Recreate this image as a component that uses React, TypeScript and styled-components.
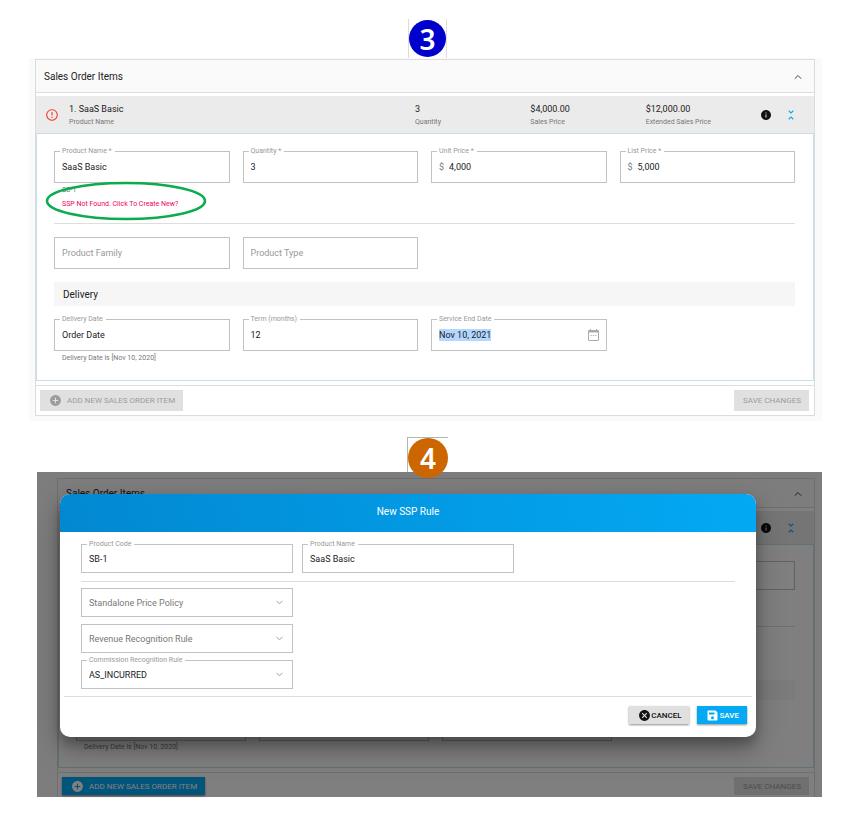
import React, { useId } from "react";
import styled, { createGlobalStyle, css } from "styled-components";
import { ChevronDown, ChevronUp } from "lucide-react";
import { MdAddCircle, MdCancel, MdErrorOutline, MdInfo, MdUnfoldLess } from "react-icons/md";

const GlobalStyle = createGlobalStyle`
  *, *::before, *::after { box-sizing: border-box; }
  body {
    margin: 0;
    background: #fff;
    color: #222;
    font-family: Roboto, "Liberation Sans", sans-serif;
    font-size: 9px;
  }
  h2, h3, p { margin: 0; font-weight: 400; }
  button, input, select { font-family: inherit; }
`;

const Page = styled.main`
  padding: 19px 31px 24px 29px;
`;

const StepRow = styled.div`
  display: flex;
  justify-content: center;
  padding-left: 4px;
`;

const StepFrame = styled.div<{ $tall?: boolean }>`
  position: relative;
  z-index: 2;
  display: flex;
  border: solid #dcdcdc;
  ${(p) =>
    p.$tall
      ? css`height: 35px; border-width: 1px 0 0 1px; border-color: #b4b4b4; margin-top: 16px;`
      : css`height: 39px; border-width: 0 1px; padding-top: 1px;`}
`;

const StepBadge = styled.div<{ $color: string; $size: number }>`
  flex: none;
  width: ${(p) => p.$size}px;
  height: ${(p) => p.$size}px;
  border-radius: 50%;
  background: ${(p) => p.$color};
  color: #fff;
  font: 600 28px/1 "Noto Sans", sans-serif;
  display: flex;
  align-items: center;
  justify-content: center;
`;

const Screen = styled.section<{ $compact?: boolean }>`
  position: relative;
  background: #fafafa;
  ${(p) =>
    p.$compact
      ? css`
          --header-h: 28px;
          --row-h: 33px;
          --gap-row: 3px;
          --field-h: 29px;
          --helper-h: 13px;
          --pad-top: 16px;
          --pad-bottom: 13px;
          --divider-top: 10px;
          --space: 12px;
          --band-h: 20px;
          --button-h: 18px;
          margin-left: 8px;
          padding: 6px 7px 0 20px;
        `
      : css`
          --header-h: 32px;
          --row-h: 37px;
          --gap-row: 3px;
          --field-h: 32px;
          --helper-h: 14px;
          --pad-top: 17px;
          --pad-bottom: 15px;
          --divider-top: 12px;
          --space: 13px;
          --band-h: 24px;
          --button-h: 21px;
          padding: 1px 7px 5px 6px;
        `}
`;

const Card = styled.div<{ $open?: boolean }>`
  background: #fff;
  border: 1px solid #dcdcdc;
  ${(p) => p.$open && css`border-bottom: 0;`}
`;

const CardHeader = styled.header`
  display: flex;
  align-items: center;
  justify-content: space-between;
  height: calc(var(--header-h) + 1px);
  margin-bottom: var(--gap-row);
  padding: 2px 10px 0 8px;
  background: #fafafa;
  border-bottom: 1px solid #dedede;
`;

const CardTitle = styled.h2`
  font-size: 10px;
  line-height: 14px;
`;

const IconButton = styled.button<{ $color?: string }>`
  display: flex;
  padding: 0;
  border: 0;
  background: none;
  color: ${(p) => p.$color ?? "#444"};
`;

const ItemRow = styled.div`
  display: grid;
  grid-template-columns: 33px 3fr 1fr 1fr 1fr 53px;
  align-items: center;
  height: var(--row-h);
  background: #ebebeb;
`;

const AlertCell = styled.div`
  display: flex;
  padding-left: 9px;
  color: #f44336;
`;

const Summary = styled.div`
  padding-top: 2px;
  white-space: nowrap;
`;

const Value = styled.div`
  line-height: 13px;
`;

const Caption = styled.div`
  font-size: 7px;
  line-height: 12px;
  color: #777;
`;

const RowActions = styled.div`
  display: flex;
  align-items: center;
  justify-content: flex-end;
  gap: 12px;
  padding-right: 16px;
`;

const Panel = styled.div`
  border: 1px solid #c3dfec;
  padding: var(--pad-top) 18px var(--pad-bottom) 17px;
  margin-bottom: 4px;
`;

const FieldGrid = styled.div<{ $columns?: number; $gap?: number }>`
  display: grid;
  grid-template-columns: repeat(${(p) => p.$columns ?? 4}, minmax(0, 1fr));
  column-gap: ${(p) => p.$gap ?? 13}px;
`;

const FieldBox = styled.div`
  position: relative;
  display: flex;
  align-items: center;
  height: var(--field-h);
  padding: 0 7px;
  border: 1px solid #c2c2c2;
`;

const FieldLabel = styled.label`
  position: absolute;
  top: -6px;
  left: 5px;
  padding: 0 3px 0 2px;
  background: #fff;
  color: #999;
  font-size: 7px;
  line-height: 10px;
  white-space: nowrap;
`;

const TextInput = styled.input<{ $selected?: boolean }>`
  min-width: 0;
  width: 100%;
  height: 12px;
  padding: 0;
  border: 0;
  outline: 0;
  background: none;
  color: #222;
  font-size: 9px;
  line-height: 12px;
  &::placeholder { color: #999; opacity: 1; }
  ${(p) =>
    p.$selected &&
    css`
      width: auto;
      field-sizing: content;
      margin-right: auto;
      background: #b3d7ff;
    `}
`;

const Prefix = styled.span`
  margin-right: 5px;
  color: #777;
`;

const SelectInput = styled.select<{ $empty?: boolean }>`
  appearance: none;
  flex: 1;
  min-width: 0;
  height: 14px;
  padding: 0;
  border: 0;
  outline: 0;
  background: none;
  color: ${(p) => (p.$empty ? "#777" : "#222")};
  font-size: 9px;
  line-height: 14px;
`;

const SelectColumn = styled.div`
  display: grid;
  gap: 7px;
`;

const Helper = styled.p`
  padding-left: 8px;
  color: #777;
  font-size: 7px;
  line-height: var(--helper-h);
  white-space: nowrap;
`;

const ErrorWrap = styled.div`
  position: relative;
`;

const ErrorLink = styled.button`
  display: block;
  padding: 0 0 0 8px;
  border: 0;
  background: none;
  color: #f50057;
  font-size: 7px;
  line-height: var(--helper-h);
  white-space: nowrap;
`;

const Highlight = styled.svg`
  position: absolute;
  left: -9px;
  top: -17px;
  width: 162px;
  height: 41px;
  overflow: visible;
  pointer-events: none;
`;

const Divider = styled.hr`
  margin: var(--divider-top) 0 var(--space);
  border: 0;
  height: 1px;
  background: #dedede;
`;

const Band = styled.h3`
  display: flex;
  align-items: center;
  height: var(--band-h);
  margin: var(--space) 0;
  padding: 1px 0 0 9px;
  background: #f6f6f6;
  font-size: 10px;
`;

const CardFooter = styled.footer<{ $open?: boolean }>`
  display: flex;
  justify-content: space-between;
  padding: 4px 5px ${(p) => (p.$open ? 2 : 4)}px 4px;
  border-top: 1px solid #dedede;
`;

const Button = styled.button<{ $tone?: "primary" | "neutral"; $tight?: boolean }>`
  display: flex;
  align-items: center;
  gap: ${(p) => (p.$tight ? 0 : 5)}px;
  height: var(--button-h);
  padding: 0 8px 0 9px;
  border: 0;
  background: #e0e0e0;
  color: #9c9c9c;
  font-size: 8px;
  font-weight: ${(p) => (p.$tight ? 500 : 400)};
  white-space: nowrap;
  ${(p) => p.$tone && css`box-shadow: 0 1px 2px rgba(0, 0, 0, 0.45);`}
  ${(p) => p.$tone === "neutral" && css`color: #111;`}
  ${(p) => p.$tone === "primary" && css`background: #03a9f4; color: #fff;`}
`;

const Backdrop = styled.div`
  position: absolute;
  inset: 0;
  overflow: hidden;
  padding: 22px 66px 0 23px;
  background: rgba(0, 0, 0, 0.5);
`;

const Dialog = styled.div`
  border-radius: 10px;
  background: #fff;
  overflow: hidden;
  box-shadow: 0 8px 12px rgba(0, 0, 0, 0.25), 0 12px 30px rgba(0, 0, 0, 0.25);
`;

const DialogTitle = styled.h2`
  height: 38px;
  background: linear-gradient(75deg, #0288d1, #03a9f4);
  color: #fff;
  font-size: 10px;
  line-height: 36px;
  text-align: center;
`;

const DialogBody = styled.div`
  padding: 12px 21px 7px;
  hr { margin: 8px 0 6px; }
`;

const DialogFooter = styled.footer`
  display: flex;
  justify-content: flex-end;
  gap: 8px;
  margin: 0 4px;
  padding: 9px 5px 13px;
  border-top: 1px solid #dedede;
`;

type FieldProps = {
  label: string;
  value?: string;
  prefix?: string;
  selected?: boolean;
  icon?: React.ReactNode;
};

function TextField({ label, value, prefix, selected, icon }: FieldProps) {
  const id = useId();
  return (
    <FieldBox>
      {value !== undefined && <FieldLabel htmlFor={id}>{label}</FieldLabel>}
      {prefix && <Prefix>{prefix}</Prefix>}
      <TextInput
        id={id}
        defaultValue={value}
        placeholder={value === undefined ? label : undefined}
        aria-label={value === undefined ? label : undefined}
        $selected={selected}
      />
      {icon}
    </FieldBox>
  );
}

function SelectField({ label, value }: { label: string; value?: string }) {
  const id = useId();
  return (
    <FieldBox>
      {value && <FieldLabel htmlFor={id}>{label}</FieldLabel>}
      <SelectInput id={id} $empty={!value} aria-label={value ? undefined : label}>
        <option>{value ?? label}</option>
      </SelectInput>
      <ChevronDown size={11} color="#999" strokeWidth={2} />
    </FieldBox>
  );
}

function CalendarIcon() {
  return (
    <svg width="11" height="12" viewBox="0 0 11 12" fill="none" stroke="#aaa" aria-hidden="true">
      <rect x="0.5" y="1.5" width="10" height="10" rx="0.5" />
      <path d="M0 2.5h11" strokeWidth="2" />
      <path d="M2.5 0v2M8.5 0v2" />
      <path d="M2.5 6.5h1.2M4.9 6.5h1.2M7.3 6.5h1.2" />
    </svg>
  );
}

function DiskIcon() {
  return (
    <svg width="13" height="13" viewBox="0 0 13 13" aria-hidden="true">
      <path
        fill="currentColor"
        fillRule="evenodd"
        d="M2.5 1.5h7l2 2v7a1 1 0 0 1-1 1h-8a1 1 0 0 1-1-1v-8a1 1 0 0 1 1-1zM3 3.5v2h5.500v-2zM6.500 7.200a1.500 1.500 0 1 0 0 3a1.500 1.500 0 1 0 0-3z"
      />
    </svg>
  );
}

const totals = [
  ["3", "Quantity"],
  ["$4,000.00", "Sales Price"],
  ["$12,000.00", "Extended Sales Price"],
];

function OrderItems({ dialogOpen }: { dialogOpen?: boolean }) {
  return (
    <Card $open={dialogOpen}>
      <CardHeader>
        <CardTitle>Sales Order Items</CardTitle>
        <IconButton aria-label="Collapse section">
          <ChevronUp size={12} strokeWidth={2} />
        </IconButton>
      </CardHeader>
      <ItemRow>
        <AlertCell>
          <MdErrorOutline size={14} />
        </AlertCell>
        <Summary>
          <Value>1. SaaS Basic</Value>
          <Caption>Product Name</Caption>
        </Summary>
        {totals.map(([value, caption]) => (
          <Summary key={caption}>
            <Value>{value}</Value>
            <Caption>{caption}</Caption>
          </Summary>
        ))}
        <RowActions>
          <IconButton aria-label="Item details" $color="#111">
            <MdInfo size={12} />
          </IconButton>
          <IconButton aria-label="Collapse item" $color="#03a9f4">
            <MdUnfoldLess size={14} />
          </IconButton>
        </RowActions>
      </ItemRow>
      <Panel>
        <FieldGrid>
          <TextField label="Product Name *" value="SaaS Basic" />
          <TextField label="Quantity *" value="3" />
          <TextField label="Unit Price *" value="4,000" prefix="$" />
          <TextField label="List Price *" value="5,000" prefix="$" />
        </FieldGrid>
        <Helper>SB-1</Helper>
        <ErrorWrap>
          <ErrorLink>SSP Not Found. Click To Create New?</ErrorLink>
          {!dialogOpen && (
            <Highlight viewBox="0 0 162 41" aria-hidden="true">
              <ellipse cx="81" cy="21" rx="79" ry="18" fill="none" stroke="#0bab4f" strokeWidth="2.6" />
            </Highlight>
          )}
        </ErrorWrap>
        <Divider />
        <FieldGrid>
          <TextField label="Product Family" />
          <TextField label="Product Type" />
        </FieldGrid>
        <Band>Delivery</Band>
        <FieldGrid>
          <TextField label="Delivery Date" value="Order Date" />
          <TextField label="Term (months)" value="12" />
          <TextField label="Service End Date" value="Nov 10, 2021" selected={!dialogOpen} icon={<CalendarIcon />} />
        </FieldGrid>
        <Helper>Delivery Date is [Nov 10, 2020]</Helper>
      </Panel>
      <CardFooter $open={dialogOpen}>
        <Button $tone={dialogOpen ? "primary" : undefined} disabled={!dialogOpen}>
          <MdAddCircle size={13} />
          ADD NEW SALES ORDER ITEM
        </Button>
        <Button disabled>SAVE CHANGES</Button>
      </CardFooter>
    </Card>
  );
}

function NewRuleDialog() {
  return (
    <Backdrop>
      <Dialog role="dialog" aria-label="New SSP Rule">
        <DialogTitle>New SSP Rule</DialogTitle>
        <DialogBody>
          <FieldGrid $columns={3} $gap={9}>
            <TextField label="Product Code" value="SB-1" />
            <TextField label="Product Name" value="SaaS Basic" />
          </FieldGrid>
          <Divider />
          <FieldGrid $columns={3} $gap={9}>
            <SelectColumn>
              <SelectField label="Standalone Price Policy" />
              <SelectField label="Revenue Recognition Rule" />
              <SelectField label="Commission Recognition Rule" value="AS_INCURRED" />
            </SelectColumn>
          </FieldGrid>
        </DialogBody>
        <DialogFooter>
          <Button $tone="neutral" $tight>
            <MdCancel size={13} />
            CANCEL
          </Button>
          <Button $tone="primary" $tight>
            <DiskIcon />
            SAVE
          </Button>
        </DialogFooter>
      </Dialog>
    </Backdrop>
  );
}

export default function App() {
  return (
    <>
      <GlobalStyle />
      <Page>
        <StepRow>
          <StepFrame>
            <StepBadge $color="#0000cc" $size={37}>3</StepBadge>
          </StepFrame>
        </StepRow>
        <Screen>
          <OrderItems />
        </Screen>
        <StepRow>
          <StepFrame $tall>
            <StepBadge $color="#cc6600" $size={40}>4</StepBadge>
          </StepFrame>
        </StepRow>
        <Screen $compact>
          <OrderItems dialogOpen />
          <NewRuleDialog />
        </Screen>
      </Page>
    </>
  );
}
